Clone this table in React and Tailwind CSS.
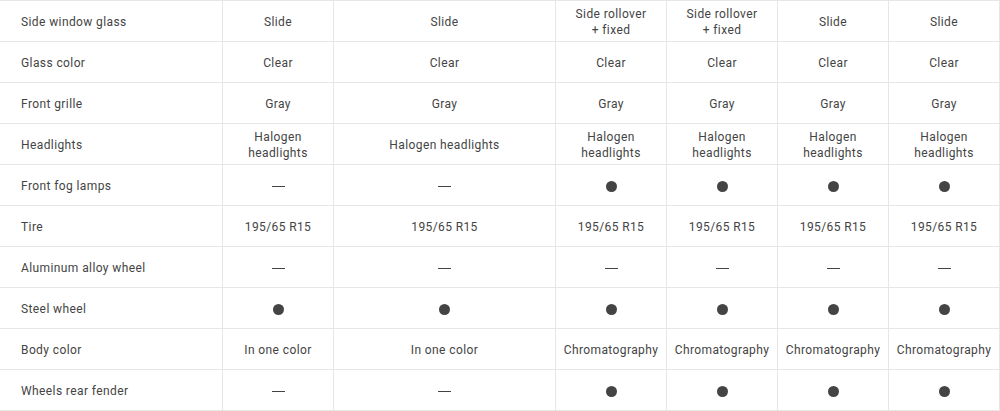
import React from 'react';

const DOT = 'dot';
const DASH = 'dash';

const ROWS = [
  ['Side window glass', 'Slide', 'Slide', 'Side rollover\n+ fixed', 'Side rollover\n+ fixed', 'Slide', 'Slide'],
  ['Glass color', 'Clear', 'Clear', 'Clear', 'Clear', 'Clear', 'Clear'],
  ['Front grille', 'Gray', 'Gray', 'Gray', 'Gray', 'Gray', 'Gray'],
  ['Headlights', 'Halogen\nheadlights', 'Halogen headlights', 'Halogen\nheadlights', 'Halogen\nheadlights', 'Halogen\nheadlights', 'Halogen\nheadlights'],
  ['Front fog lamps', DASH, DASH, DOT, DOT, DOT, DOT],
  ['Tire', '195/65 R15', '195/65 R15', '195/65 R15', '195/65 R15', '195/65 R15', '195/65 R15'],
  ['Aluminum alloy wheel', DASH, DASH, DASH, DASH, DASH, DASH],
  ['Steel wheel', DOT, DOT, DOT, DOT, DOT, DOT],
  ['Body color', 'In one color', 'In one color', 'Chromatography', 'Chromatography', 'Chromatography', 'Chromatography'],
  ['Wheels rear fender', DASH, DASH, DOT, DOT, DOT, DOT],
];

function Cell({ value }) {
  if (value === DOT) return <span className="block w-[11px] h-[11px] rounded-full bg-[#444]" />;
  if (value === DASH) return <span className="block w-[13px] h-[1px] bg-[#444] mt-[1px]" aria-label="—" />;
  return <span className="whitespace-pre-line">{value}</span>;
}

export default function App() {
  return (
    <div className="w-[1000px] bg-white text-[12px] leading-[16px] tracking-[0.4px] text-[#444] font-['Roboto',sans-serif]">
      <div className="grid grid-cols-[223px_111px_222px_111px_111px_111px_111px] border-b border-[#e6e6e6]">
        {ROWS.map((row, r) =>
          row.map((v, c) => (
            <div
              key={`${r}-${c}`}
              className={
                c === 0
                  ? 'h-[41px] pt-[2px] border-t border-r border-[#e6e6e6] flex items-center pl-[21px]'
                  : 'h-[41px] pt-[2px] border-t border-r border-[#e6e6e6] flex items-center justify-center text-center'
              }
            >
              <Cell value={v} />
            </div>
          ))
        )}
      </div>
    </div>
  );
}
